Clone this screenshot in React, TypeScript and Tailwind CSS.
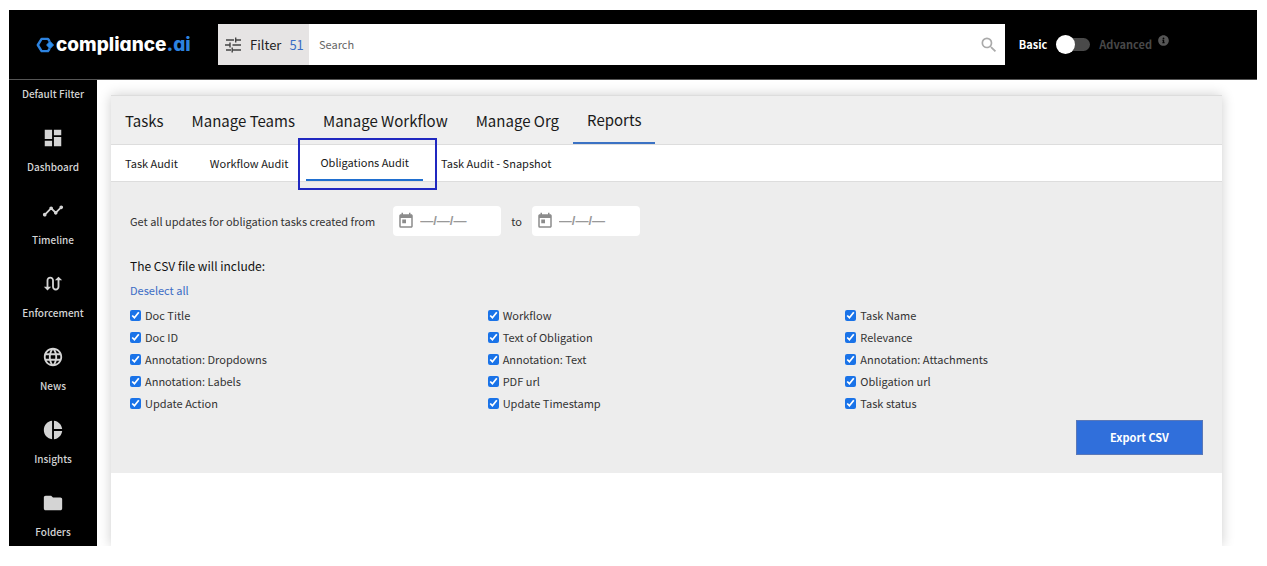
import React, { useId, useState } from "react";
import {
  MdDashboard,
  MdTimeline,
  MdSwapCalls,
  MdLanguage,
  MdPieChart,
  MdFolder,
  MdSearch,
  MdToday,
} from "react-icons/md";
import { FaInfoCircle } from "react-icons/fa";
import type { IconType } from "react-icons";

const navItems: { label: string; icon: IconType }[] = [
  { label: "Dashboard", icon: MdDashboard },
  { label: "Timeline", icon: MdTimeline },
  { label: "Enforcement", icon: MdSwapCalls },
  { label: "News", icon: MdLanguage },
  { label: "Insights", icon: MdPieChart },
  { label: "Folders", icon: MdFolder },
];

const tabs = ["Tasks", "Manage Teams", "Manage Workflow", "Manage Org", "Reports"];
const auditTabs = ["Task Audit", "Workflow Audit", "Obligations Audit", "Task Audit - Snapshot"];

const fields = [
  "Doc Title", "Workflow", "Task Name",
  "Doc ID", "Text of Obligation", "Relevance",
  "Annotation: Dropdowns", "Annotation: Text", "Annotation: Attachments",
  "Annotation: Labels", "PDF url", "Obligation url",
  "Update Action", "Update Timestamp", "Task status",
];

function Logo() {
  return (
    <a href="#" className="flex w-[182px] shrink-0 items-center gap-0.5 text-white">
      <svg viewBox="0 0 18 16" className="h-4 w-[18px]" aria-hidden="true">
        <path d="M13.6 4.2 12 1.9H5.6L1.8 8l3.8 6.1H12l1.6-2.3" fill="none" stroke="#2d83e0" strokeWidth="2.4" strokeLinejoin="round" />
        <path d="M14 4.2 17.6 8 14 11.8 10.6 8z" fill="#2d8ff0" stroke="#2d8ff0" strokeWidth="0.8" strokeLinejoin="round" />
      </svg>
      <span className="font-['Inter','Liberation_Sans',sans-serif] text-[19px] leading-6 font-extrabold [font-feature-settings:'cv11']">
        compliance<span className="text-[#2d83e0]">.ai</span>
      </span>
    </a>
  );
}

function SlidersIcon() {
  return (
    <svg viewBox="0 0 18 18" className="size-[18px] text-[#444]" fill="none" stroke="currentColor" strokeWidth="1.4" aria-hidden="true">
      <path d="M2 4h8M11.7 1.5v5M11.7 4H17M1 9h5M6 6.5v5M8.5 9H17M2 14h5M8.2 11.5v5M8.2 14H17" />
    </svg>
  );
}

function Header() {
  const [advanced, setAdvanced] = useState(false);
  return (
    <header className="flex h-[70px] items-center border-b border-[#555] bg-black pr-[88px] pl-[27px]">
      <Logo />
      <form className="flex h-[41px] min-w-0 flex-1 bg-white" onSubmit={(e) => e.preventDefault()}>
        <button type="button" className="flex w-[91px] shrink-0 items-center gap-2 bg-[#e6e4e4] pl-1.5 text-[13px] text-[#222]">
          <SlidersIcon />
          <span>Filter</span>
          <span className="text-[#3b6cc5]">51</span>
        </button>
        <input aria-label="Search" placeholder="Search" className="min-w-0 flex-1 px-2.5 text-[11px] text-[#333] outline-none placeholder:text-[#666]" />
        <button type="submit" aria-label="Submit search" className="px-1.5 text-[#aaa]">
          <MdSearch className="size-5" />
        </button>
      </form>
      <div className="ml-3.5 flex shrink-0 items-center text-[11px] font-bold">
        <span className="text-white">Basic</span>
        <button
          type="button"
          role="switch"
          aria-checked={advanced}
          aria-label="Advanced mode"
          onClick={() => setAdvanced(!advanced)}
          className="mx-[9px] w-[34px]"
        >
          <span className={advanced ? "flex h-[13px] items-center justify-end rounded-full bg-[#4a4a4a]" : "flex h-[13px] items-center rounded-full bg-[#4a4a4a]"}>
            <span className="size-[19px] rounded-full bg-white" />
          </span>
        </button>
        <span className="text-[#484848]">Advanced</span>
        <FaInfoCircle className="mb-2 ml-1.5 size-[11px] text-[#555]" />
      </div>
    </header>
  );
}

function Sidebar() {
  return (
    <nav className="flex w-[88px] shrink-0 flex-col bg-black pb-1.5 text-center text-[10px] leading-4 font-medium text-[#d4d4d4]">
      <a href="#" className="pt-1.5">Default Filter</a>
      {navItems.map(({ label, icon: Icon }) => (
        <a key={label} href="#" className="flex h-[73px] flex-col items-center justify-end gap-2.5">
          <Icon className="size-[22px]" />
          {label}
        </a>
      ))}
    </nav>
  );
}

function DateField({ label }: { label: string }) {
  const id = useId();
  return (
    <div className="flex h-[30px] w-[108px] items-center gap-[5px] rounded bg-white pl-1 text-[#8c8c8c]">
      <label htmlFor={id} aria-label={label}>
        <MdToday className="size-[18px]" />
      </label>
      <input id={id} placeholder="—/—/—" className="w-16 font-['Liberation_Sans',sans-serif] text-[13px] font-bold outline-none placeholder:text-[#999]" />
    </div>
  );
}

function AuditPanel() {
  const [checked, setChecked] = useState<string[]>(fields);
  const toggle = (name: string) =>
    setChecked(checked.includes(name) ? checked.filter((f) => f !== name) : [...checked, name]);
  return (
    <div className="flex flex-col items-start bg-[#ededed] px-[19px] pt-6 pb-[18px] text-[11px] text-[#333]">
      <div className="flex items-center">
        <span className="mr-[18px]">Get all updates for obligation tasks created from</span>
        <DateField label="Start date" />
        <span className="mx-2.5">to</span>
        <DateField label="End date" />
      </div>
      <h2 className="mt-5 text-xs leading-5 text-[#111]">The CSV file will include:</h2>
      <button type="button" className="mt-1 leading-5 text-[#3b6cc5]" onClick={() => setChecked([])}>
        Deselect all
      </button>
      <div className="mt-1 grid w-full grid-cols-3">
        {fields.map((name) => (
          <label key={name} className="flex h-[22px] items-center gap-1">
            <input type="checkbox" checked={checked.includes(name)} onChange={() => toggle(name)} className="size-[11px] accent-[#1a73e8]" />
            {name}
          </label>
        ))}
      </div>
      <button type="button" className="mt-1.5 h-[35px] w-[127px] self-end border border-[#5a78b8] bg-[#306fdb] font-bold text-white">
        Export CSV
      </button>
    </div>
  );
}

export default function App() {
  return (
    <div className="min-h-screen bg-white px-[9px] pt-2.5 pb-5 font-['Noto_Sans_CJK_SC','Noto_Sans',sans-serif]">
      <div className="mr-px">
        <Header />
        <div className="flex overflow-hidden">
          <Sidebar />
          <main className="flex min-w-0 flex-1 flex-col pt-[15px] pr-[35px] pl-3.5">
            <section className="flex-1 border-t border-[#ddd] bg-white shadow-[0_0_12px_rgba(0,0,0,0.2)]">
              <div role="tablist" className="flex h-[49px] border-b border-[#ddd] bg-[#efefef] text-[15px] text-[#1a1a1a]">
                {tabs.map((tab) => (
                  <button
                    key={tab}
                    type="button"
                    role="tab"
                    aria-selected={tab === "Reports"}
                    className={tab === "Reports" ? "border-b-2 border-[#3b72c4] px-3.5 pt-[3px]" : "px-3.5 pt-[3px]"}
                  >
                    {tab}
                  </button>
                ))}
              </div>
              <div role="tablist" className="flex h-[37px] gap-1 border-b border-[#ddd] bg-white text-[11px] text-[#1a1a1a]">
                {auditTabs.map((tab) => (
                  <button
                    key={tab}
                    type="button"
                    role="tab"
                    aria-selected={tab === "Obligations Audit"}
                    className={tab === "Obligations Audit" ? "relative border-b-2 border-[#1f6fd0] px-3.5" : "px-3.5"}
                  >
                    {tab}
                    {tab === "Obligations Audit" && (
                      <span className="pointer-events-none absolute -top-[7px] -right-3.5 -bottom-[11px] -left-2 border-2 border-[#2028c0]" />
                    )}
                  </button>
                ))}
              </div>
              <AuditPanel />
            </section>
          </main>
        </div>
      </div>
    </div>
  );
}
